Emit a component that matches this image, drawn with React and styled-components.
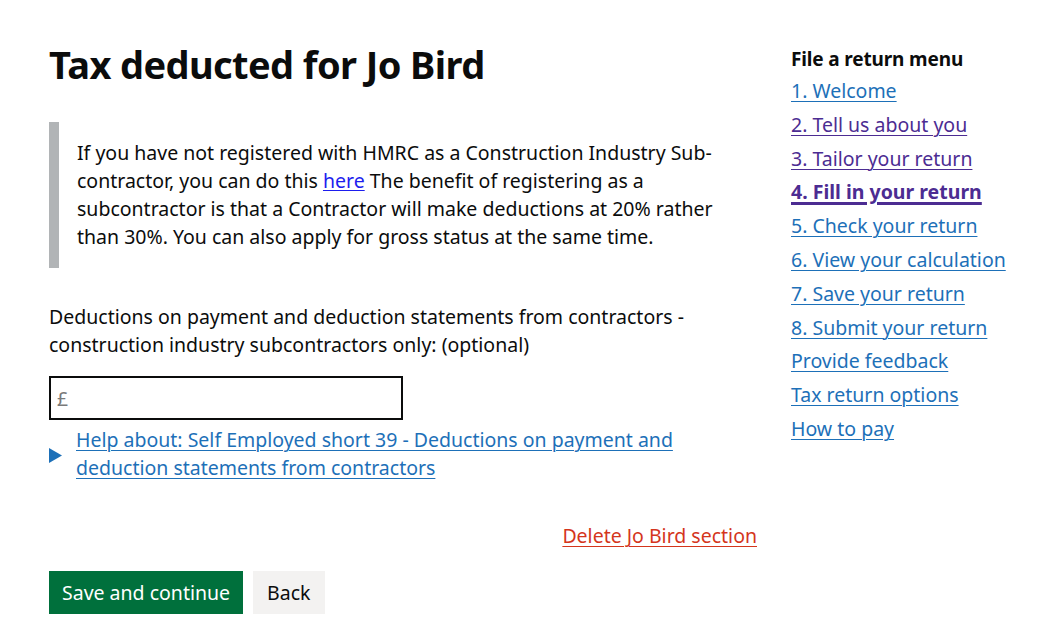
import React from "react";
import styled, { createGlobalStyle } from "styled-components";

const GlobalStyle = createGlobalStyle`
	body {
		margin: 0;
		background: #fff;
		font-family: "Noto Sans", "Liberation Sans", Arial, sans-serif;
		color: #0b0c0c;
		-webkit-font-smoothing: antialiased;
	}
`;

const Page = styled.div`
	display: flex;
	align-items: flex-start;
	gap: 34px;
	padding: 37px 0 0 49px;
`;

const Main = styled.main`
	width: 708px;
`;

const Heading = styled.h1`
	margin: 0 0 31px;
	font-size: 38px;
	line-height: 54px;
	font-weight: 700;
	letter-spacing: -0.6px;
`;

const Inset = styled.div`
	border-left: 10px solid #b1b4b6;
	padding: 17px 0 17px 18px;
	margin-bottom: 35px;

	p {
		margin: 0;
		max-width: 650px;
		font-size: 19.5px;
		line-height: 28px;
	}

	a {
		color: #1d1dee;
		text-decoration-thickness: 1px;
		text-underline-offset: 2px;
	}
`;

const Label = styled.label`
	display: block;
	font-size: 19.5px;
	line-height: 28px;
	margin-bottom: 17px;
`;

const Input = styled.input`
	box-sizing: border-box;
	display: block;
	width: 354px;
	height: 44px;
	border: 2px solid #0b0c0c;
	padding: 0 6px;
	font-family: inherit;
	font-size: 19.5px;
	margin-bottom: 6px;

	&::placeholder {
		color: #7a7a7a;
	}
`;

const Details = styled.div`
	display: flex;
	align-items: center;
	gap: 14px;

	svg {
		flex: none;
		margin-top: 2px;
	}
`;

const TextLink = styled.a`
	color: ${(p) => p.$colour || "#1d70b8"};
	font-size: 19.5px;
	line-height: 28px;
	font-weight: ${(p) => (p.$bold ? 700 : 400)};
	text-decoration: underline;
	text-decoration-thickness: ${(p) => (p.$bold ? "3px" : "1px")};
	text-underline-offset: 3px;
`;

const DeleteRow = styled.div`
	display: flex;
	justify-content: flex-end;
	margin: 40px 0 21px;
`;

const Buttons = styled.div`
	display: flex;
	gap: 10px;
`;

const Button = styled.button`
	font-family: inherit;
	font-size: 19.5px;
	line-height: 1;
	border: 0;
	padding: 0 ${(p) => (p.$secondary ? "15px 0 14px" : "13px")};
	height: 43px;
	background: ${(p) => (p.$secondary ? "#f3f2f1" : "#00703c")};
	color: ${(p) => (p.$secondary ? "#0b0c0c" : "#fff")};
	box-shadow: 0 2px 0 ${(p) => (p.$secondary ? "#929191" : "#002d18")};
	cursor: pointer;
`;

const Side = styled.nav`
	padding-top: 8px;

	h2 {
		margin: 0 0 4px;
		font-size: 19px;
		line-height: 28px;
		font-weight: 700;
		letter-spacing: -0.15px;
	}

	ul {
		list-style: none;
		margin: 0;
		padding: 0;
	}

	li {
		height: 33.8px;
	}
`;

const menu = [
	{ text: "1. Welcome" },
	{ text: "2. Tell us about you", visited: true },
	{ text: "3. Tailor your return", visited: true },
	{ text: "4. Fill in your return", visited: true, bold: true },
	{ text: "5. Check your return" },
	{ text: "6. View your calculation" },
	{ text: "7. Save your return" },
	{ text: "8. Submit your return" },
	{ text: "Provide feedback" },
	{ text: "Tax return options" },
	{ text: "How to pay" },
];

const App = () => (
	<>
		<GlobalStyle />
		<Page>
			<Main>
				<Heading>Tax deducted for Jo Bird</Heading>
				<Inset>
					<p>
						If you have not registered with HMRC as a Construction Industry Sub-contractor, you can do this{" "}
						<a href="#">here</a> The benefit of registering as a subcontractor is that a Contractor will make
						deductions at 20% rather than 30%. You can also apply for gross status at the same time.
					</p>
				</Inset>
				<Label htmlFor="cis">
					Deductions on payment and deduction statements from contractors - construction industry subcontractors
					only: (optional)
				</Label>
				<Input id="cis" placeholder="£" />
				<Details>
					<svg width="13" height="15" viewBox="0 0 13 15">
						<path d="M0 0 L13 7.5 L0 15 Z" fill="#1d70b8" />
					</svg>
					<TextLink href="#">
						Help about: Self Employed short 39 - Deductions on payment and deduction statements from contractors
					</TextLink>
				</Details>
				<DeleteRow>
					<TextLink href="#" $colour="#d4351c">
						Delete Jo Bird section
					</TextLink>
				</DeleteRow>
				<Buttons>
					<Button>Save and continue</Button>
					<Button $secondary>Back</Button>
				</Buttons>
			</Main>
			<Side>
				<h2>File a return menu</h2>
				<ul>
					{menu.map((m) => (
						<li key={m.text}>
							<TextLink href="#" $bold={m.bold} $colour={m.visited ? "#4c2c92" : "#1d70b8"}>
								{m.text}
							</TextLink>
						</li>
					))}
				</ul>
			</Side>
		</Page>
	</>
);

export default App;
